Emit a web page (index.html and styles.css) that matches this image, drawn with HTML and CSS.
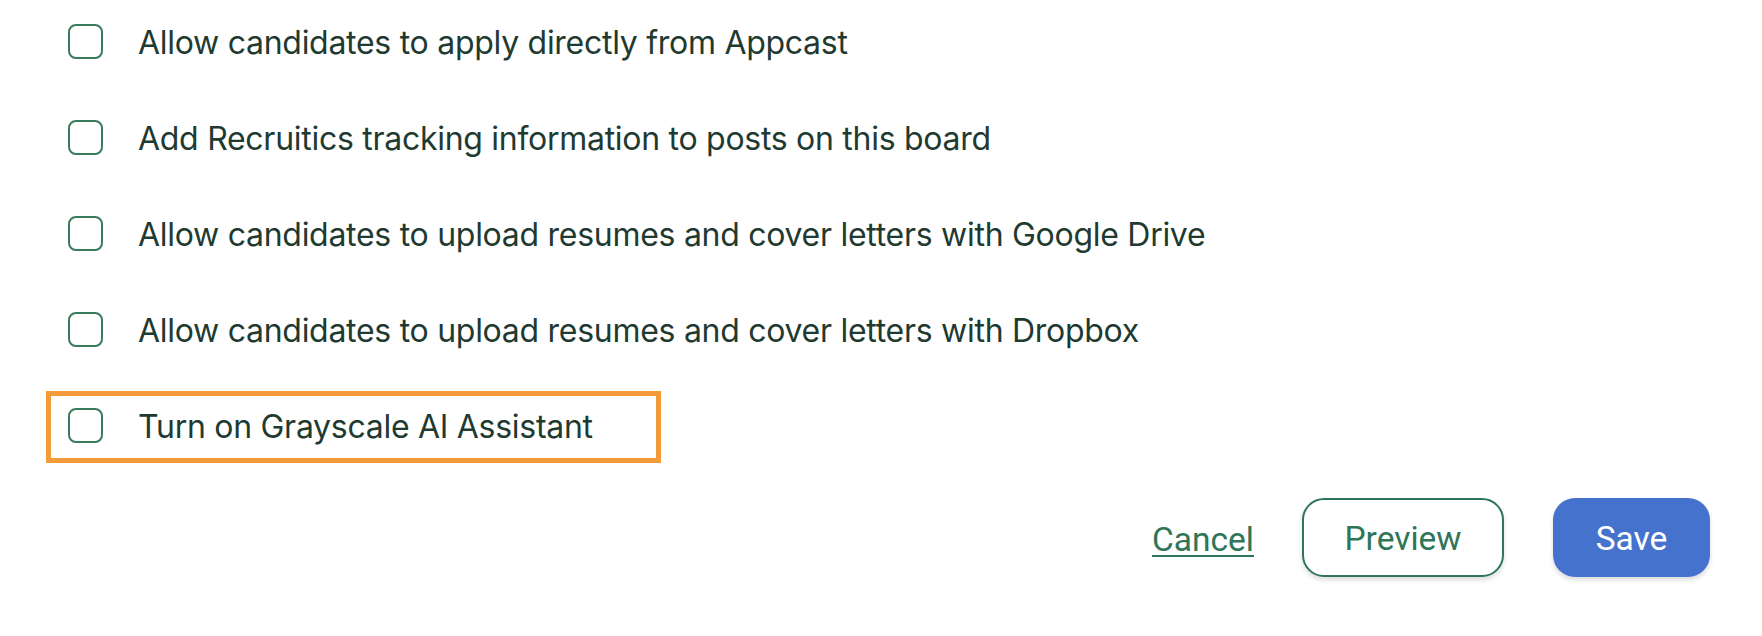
FILE: index.html
```html
<!DOCTYPE html>
<html lang="en">
<head>
<meta charset="utf-8">
<title>Job board settings</title>
<link rel="stylesheet" href="styles.css">
</head>
<body>
<div class="page">
  <ul class="options">
    <li class="option">
      <span class="box"></span>
      <span class="label">Allow candidates to apply directly from Appcast</span>
    </li>
    <li class="option">
      <span class="box"></span>
      <span class="label">Add Recruitics tracking information to posts on this board</span>
    </li>
    <li class="option">
      <span class="box"></span>
      <span class="label">Allow candidates to upload resumes and cover letters with Google Drive</span>
    </li>
    <li class="option">
      <span class="box"></span>
      <span class="label">Allow candidates to upload resumes and cover letters with Dropbox</span>
    </li>
    <li class="option highlighted">
      <span class="box"></span>
      <span class="label">Turn on Grayscale AI Assistant</span>
    </li>
  </ul>
  <div class="actions">
    <a class="cancel" href="#">Cancel</a>
    <button class="btn btn-secondary" type="button">Preview</button>
    <button class="btn btn-primary" type="button">Save</button>
  </div>
</div>
</body>
</html>
```

FILE: styles.css
```css
html, body {
  margin: 0;
  padding: 0;
  background: #ffffff;
}

.page {
  width: 1762px;
  height: 636px;
  box-sizing: border-box;
  padding: 24px 52px 0 68px;
  display: flex;
  flex-direction: column;
}

.options {
  list-style: none;
  margin: 0;
  padding: 0;
  display: flex;
  flex-direction: column;
  gap: 61px;
}

.option {
  display: flex;
  align-items: center;
  gap: 35px;
  height: 35px;
  font-family: Inter, "Liberation Sans", sans-serif;
  font-size: 32px;
  color: #1f3a31;
}

.box {
  flex: none;
  width: 35px;
  height: 35px;
  box-sizing: border-box;
  border: 2px solid #3a7a5d;
  border-radius: 8px;
  background: #ffffff;
}

.label {
  white-space: nowrap;
  letter-spacing: -0.28px;
  padding-top: 2px;
}

.highlighted {
  position: relative;
  align-self: flex-start;
}

.highlighted::after {
  content: "";
  position: absolute;
  left: -22px;
  top: -17px;
  width: 615px;
  height: 72px;
  box-sizing: border-box;
  border: 5px solid #f39b3a;
  pointer-events: none;
}

.actions {
  margin-top: 55px;
  display: flex;
  justify-content: flex-end;
  align-items: center;
  gap: 48px;
}

.cancel {
  font-family: Roboto, "Liberation Sans", sans-serif;
  font-size: 33.5px;
  color: #2f7558;
  text-decoration: underline;
  text-decoration-thickness: 2px;
  text-underline-offset: 4px;
  padding-top: 4px;
}

.btn {
  height: 79px;
  box-sizing: border-box;
  border-radius: 22px;
  padding-top: 3px;
  font-family: Roboto, "Liberation Sans", sans-serif;
  font-size: 33.5px;
  cursor: pointer;
  box-shadow: 0 3px 5px rgba(0, 0, 0, 0.14);
}

.btn-secondary {
  width: 202px;
  background: #ffffff;
  color: #2f7558;
  border: 2px solid #2f7558;
}

.btn-primary {
  width: 157px;
  margin-left: 1px;
  background: #4572cd;
  color: #ffffff;
  border: none;
}
```
